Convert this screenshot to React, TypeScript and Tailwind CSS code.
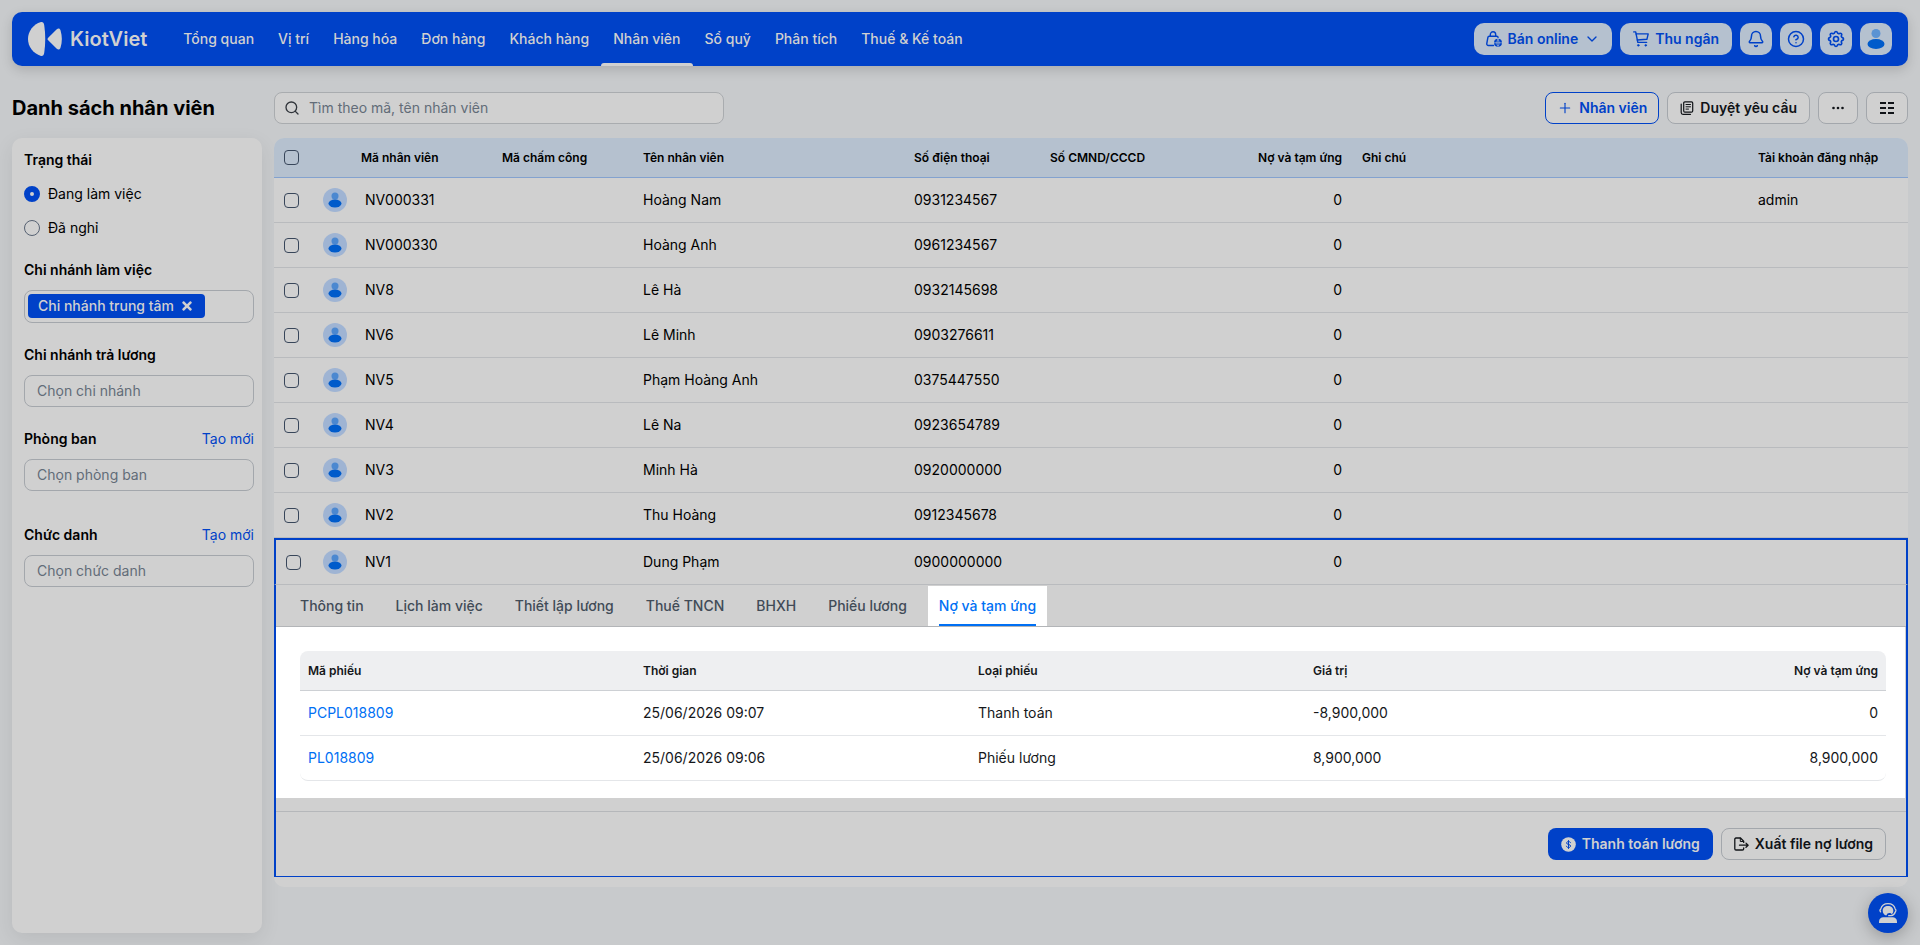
import { ReactNode, useState } from 'react'
import { Search, Plus, Bell, ChevronDown, CircleHelp } from 'lucide-react'
import { TbSettings } from 'react-icons/tb'
import { FaTimes } from 'react-icons/fa'

interface Employee {
  code: string
  name: string
  phone: string
  debt: string
  account?: string
}

const NAV_ITEMS = ['Tổng quan', 'Vị trí', 'Hàng hóa', 'Đơn hàng', 'Khách hàng', 'Nhân viên', 'Sổ quỹ', 'Phân tích', 'Thuế & Kế toán']

const EMPLOYEES: Employee[] = [
  { code: 'NV000331', name: 'Hoàng Nam', phone: '0931234567', debt: '0', account: 'admin' },
  { code: 'NV000330', name: 'Hoàng Anh', phone: '0961234567', debt: '0' },
  { code: 'NV8', name: 'Lê Hà', phone: '0932145698', debt: '0' },
  { code: 'NV6', name: 'Lê Minh', phone: '0903276611', debt: '0' },
  { code: 'NV5', name: 'Phạm Hoàng Anh', phone: '0375447550', debt: '0' },
  { code: 'NV4', name: 'Lê Na', phone: '0923654789', debt: '0' },
  { code: 'NV3', name: 'Minh Hà', phone: '0920000000', debt: '0' },
  { code: 'NV2', name: 'Thu Hoàng', phone: '0912345678', debt: '0' },
]

const SELECTED: Employee = { code: 'NV1', name: 'Dung Phạm', phone: '0900000000', debt: '0' }

const TABS = ['Thông tin', 'Lịch làm việc', 'Thiết lập lương', 'Thuế TNCN', 'BHXH', 'Phiếu lương', 'Nợ và tạm ứng']

const VOUCHERS = [
  { code: 'PCPL018809', time: '25/06/2026 09:07', type: 'Thanh toán', value: '-8,900,000', debt: '0' },
  { code: 'PL018809', time: '25/06/2026 09:06', type: 'Phiếu lương', value: '8,900,000', debt: '8,900,000' },
]

function Logo() {
  return (
    <svg className="w-[34px] h-[34px]" viewBox="0 0 34 34" fill="#d0d0d0">
      <path d="M13 .1C15 -.1 15.800 .8 16.200 3C17.600 12 17.600 22 16.200 31C15.800 33.200 15 34.100 13 33.900C5 31.500 0 24.500 0 17S5 2.500 13 .1Z" />
      <path d="M20.200 15.700L28.500 7.400C30.400 5.800 31.800 6.300 32.500 8.200C34.300 14 34.300 20 32.500 25.800C31.800 27.700 30.400 28.200 28.500 26.600L20.200 18.300C19.300 17.400 19.300 16.600 20.200 15.700Z" />
    </svg>
  )
}

function BagGlobeIcon() {
  return (
    <svg className="w-4 h-4" viewBox="0 0 16 16" fill="none" stroke="currentColor" strokeWidth="1.4" strokeLinecap="round" strokeLinejoin="round">
      <path d="M7.500 14.500H2.400C1.300 14.500 .6 13.600 .8 12.500L1.900 6.300C2 5.600 2.600 5.200 3.200 5.200H10.800C11.500 5.200 12 5.600 12.100 6.300" />
      <path d="M4.300 5V3.700C4.300 2 5.500 .8 7 .8S9.700 2 9.700 3.700V5" />
      <circle cx="12" cy="11.800" r="4" fill="currentColor" stroke="none" />
      <path d="M8.500 11.800H15.500M12 8.300C10.500 10.300 10.500 13.300 12 15.300C13.500 13.300 13.500 10.300 12 8.300Z" stroke="#b5c1cf" strokeWidth=".7" />
    </svg>
  )
}

function CartIcon() {
  return (
    <svg className="w-4 h-4" viewBox="0 0 16 16" fill="none" stroke="currentColor" strokeWidth="1.4" strokeLinecap="round" strokeLinejoin="round">
      <path d="M.7 .9H2.700L4.800 11.400H13.600" />
      <path d="M3.100 2.900H15.200L13.900 8.300L4.300 9" />
      <circle cx="5.300" cy="14.300" r=".9" fill="currentColor" strokeWidth=".6" />
      <circle cx="12.700" cy="14.300" r=".9" fill="currentColor" strokeWidth=".6" />
    </svg>
  )
}

function PagesIcon() {
  return (
    <svg className="w-[14px] h-[14px]" viewBox="0 0 14 14" fill="none" stroke="currentColor" strokeWidth="1.2" strokeLinecap="round" strokeLinejoin="round">
      <rect x="3.700" y=".8" width="9" height="10.400" rx="1.200" />
      <path d="M6 3.500H10.500M6 5.800H10.500M6 8.100H8.500" strokeWidth="1" />
      <path d="M1.200 3V11.500C1.200 12.600 1.900 13.300 3 13.300H10.500" />
    </svg>
  )
}

function ColumnsIcon() {
  return (
    <svg className="w-4 h-4" viewBox="0 0 16 16" fill="currentColor">
      <path d="M1 2h6v2H1zM9 2h6v2H9zM1 7h6v2H1zM9 7h6v2H9zM1 12h6v2H1zM9 12h6v2H9z" />
    </svg>
  )
}

function CoinIcon() {
  return (
    <svg className="w-[15px] h-[15px]" viewBox="0 0 15 15" fill="none" strokeLinecap="round">
      <circle cx="7.500" cy="7.500" r="7.300" fill="#d0d0d0" />
      <path d="M9.500 5.700C9.300 4.900 8.500 4.500 7.500 4.500C6.400 4.500 5.600 5.100 5.600 6C5.600 8 9.600 7 9.600 9C9.600 10 8.700 10.500 7.500 10.500C6.400 10.500 5.600 10 5.400 9.200M7.500 3.500V11.500" stroke="#0041c8" strokeWidth="1" />
    </svg>
  )
}

function ExportIcon() {
  return (
    <svg className="w-[15px] h-[14px]" viewBox="0 0 15 14" fill="none" stroke="currentColor" strokeWidth="1.3" strokeLinecap="round" strokeLinejoin="round">
      <path d="M9.700 10.800V11.700C9.700 12.500 9.200 13 8.400 13H2C1.200 13 .8 12.500 .8 11.700V2.300C.8 1.500 1.200 1 2 1H6.500L9.700 4.200V5.400" />
      <path d="M6.300 1.200V4.500H9.500" strokeWidth="1" />
      <path d="M5.500 8.200H14M12 6.100L14.100 8.200L12 10.300" />
    </svg>
  )
}

function SupportIcon() {
  return (
    <svg className="w-5 h-5" viewBox="0 0 20 20" fill="none" stroke="#d0d0d0" strokeWidth="1.3" strokeLinecap="round">
      <path d="M2.600 8.800C1.900 7.900 1.900 6.600 2.800 5.900C3.600 2.700 6.300 .7 10 .7S16.400 2.700 17.200 5.900C18.100 6.600 18.100 7.900 17.400 8.800C16.700 11 15.200 12.400 13 12.700H10.700" />
      <path d="M4.700 7.800C4.700 4.900 6.700 3 10 3S15.300 4.900 15.300 7.800C15.300 9.300 14.700 10.400 13.800 11.200C12.900 9.900 10.900 9.700 9.500 10.600L8.300 12.600C6.100 12 4.700 10.200 4.700 7.800Z" fill="#d0d0d0" stroke="none" />
      <path d="M1 20V18.700C1 16 2.900 14.300 5.400 14.300H14.600C17.100 14.300 19 16 19 18.700V20Z" fill="#d0d0d0" stroke="none" />
    </svg>
  )
}

function Avatar() {
  return (
    <svg className="w-6 h-6 mx-auto" viewBox="0 0 24 24">
      <circle cx="12" cy="12" r="12" fill="#9fb4d3" />
      <circle cx="12" cy="8" r="3.500" fill="#4c88d0" />
      <ellipse cx="12" cy="15.500" rx="6.500" ry="4" fill="#005bcb" />
    </svg>
  )
}

function IconButton({ label, children }: { label: string; children: ReactNode }) {
  return (
    <button type="button" aria-label={label} className="w-8 h-8 rounded-[10px] bg-[#b5c1cf] text-[#0041c8] flex items-center justify-center">
      {children}
    </button>
  )
}

function Checkbox({ label }: { label: string }) {
  return (
    <input
      type="checkbox"
      aria-label={label}
      className="appearance-none block w-[15px] h-[15px] rounded-[4px] border border-[#38465a] checked:bg-[#0041c8]"
    />
  )
}

function Header() {
  return (
    <header className="h-[54px] shrink-0 rounded-[10px] bg-[#0041c8] px-4 flex items-center shadow-[0_4px_12px_rgba(0,0,0,0.15)]">
      <a href="#" className="flex items-center gap-2 text-[#d0d0d0] text-xl font-semibold">
        <Logo />
        KiotViet
      </a>
      <nav className="ml-6 h-full flex">
        {NAV_ITEMS.map(item => (
          <a
            key={item}
            href="#"
            className={`relative h-full px-3 flex items-center text-sm font-medium whitespace-nowrap text-[#d0d0d0] ${
              item === 'Nhân viên' ? 'after:absolute after:inset-x-0 after:bottom-0 after:h-[3px] after:rounded-t-sm after:bg-[#d0d0d0]' : ''
            }`}
          >
            {item}
          </a>
        ))}
      </nav>
      <div className="ml-auto flex items-center gap-2">
        <button type="button" className="h-8 px-3 rounded-[10px] bg-[#b5c1cf] text-[#0041c8] text-sm font-semibold whitespace-nowrap flex items-center gap-1.5">
          <BagGlobeIcon />
          Bán online
          <ChevronDown className="w-4 h-4" />
        </button>
        <button type="button" className="h-8 px-[13px] rounded-[10px] bg-[#b5c1cf] text-[#0041c8] text-sm font-semibold whitespace-nowrap flex items-center gap-1.5">
          <CartIcon />
          Thu ngân
        </button>
        <IconButton label="Thông báo"><Bell className="w-[18px] h-[18px]" /></IconButton>
        <IconButton label="Trợ giúp"><CircleHelp className="w-[18px] h-[18px]" /></IconButton>
        <IconButton label="Thiết lập"><TbSettings className="w-5 h-5" /></IconButton>
        <IconButton label="Tài khoản">
          <svg className="w-8 h-8" viewBox="0 0 32 32">
            <circle cx="16" cy="10.500" r="4.500" fill="#5b93d3" />
            <ellipse cx="16" cy="21" rx="8.500" ry="5" fill="#005bcb" />
          </svg>
        </IconButton>
      </div>
    </header>
  )
}

function Toolbar() {
  const buttonClass = 'h-8 rounded-lg border border-[#a3a7ac] bg-[#d0d0d0] font-semibold whitespace-nowrap flex items-center gap-1.5'

  return (
    <div className="flex items-center text-sm text-[#101317]">
      <h1 className="w-[262px] shrink-0 text-xl font-bold text-black">Danh sách nhân viên</h1>
      <label className="w-[450px] h-8 px-[9px] flex items-center gap-[9px] rounded-lg border border-[#a9acaf] bg-[#d0d0d0]">
        <Search className="w-4 h-4 text-[#30343a]" />
        <input
          type="text"
          aria-label="Tìm kiếm"
          placeholder="Tìm theo mã, tên nhân viên"
          className="flex-1 min-w-0 outline-none placeholder:text-[#626c78]"
        />
      </label>
      <div className="ml-auto flex gap-2">
        <button type="button" className="h-8 px-[11px] rounded-lg border border-[#0041c8] bg-[#d0d0d0] text-[#0041c8] font-semibold whitespace-nowrap flex items-center gap-1.5">
          <Plus className="w-4 h-4" strokeWidth={1.7} />
          Nhân viên
        </button>
        <button type="button" className={`${buttonClass} px-3`}>
          <PagesIcon />
          Duyệt yêu cầu
        </button>
        <button type="button" aria-label="Thao tác khác" className={`${buttonClass} px-[11px]`}>
          <svg className="w-4 h-4" viewBox="0 0 16 16" fill="currentColor">
            <circle cx="3.500" cy="8" r="1.300" />
            <circle cx="8" cy="8" r="1.300" />
            <circle cx="12.500" cy="8" r="1.300" />
          </svg>
        </button>
        <button type="button" aria-label="Tùy chọn cột" className={`${buttonClass} px-3`}>
          <ColumnsIcon />
        </button>
      </div>
    </div>
  )
}

function FilterInput({ id, title, placeholder, creatable }: { id: string; title: string; placeholder: string; creatable?: boolean }) {
  return (
    <div>
      <div className="flex justify-between leading-5">
        <label htmlFor={id} className="font-semibold">{title}</label>
        {creatable && <a href="#" className="text-[#0041c8]">Tạo mới</a>}
      </div>
      <input
        id={id}
        type="text"
        placeholder={placeholder}
        className="mt-2.5 w-full h-8 px-3 pb-0.5 rounded-lg border border-[#a3a7ac] placeholder:text-[#626c78] outline-none"
      />
    </div>
  )
}

function Sidebar() {
  const [status, setStatus] = useState('working')

  const radioClass = 'appearance-none w-4 h-4 rounded-full border border-[#566172] checked:border-[6px] checked:border-[#0041c8]'

  return (
    <aside className="w-[250px] shrink-0 rounded-[10px] bg-[#d0d0d0] pl-3 pr-2 py-3 text-sm shadow-[0_6px_20px_rgba(0,0,0,0.08)]">
      <fieldset>
        <legend className="font-semibold leading-5">Trạng thái</legend>
        <label className="mt-3.5 flex items-center gap-2 leading-5">
          <input type="radio" name="status" className={radioClass} checked={status === 'working'} onChange={() => setStatus('working')} />
          Đang làm việc
        </label>
        <label className="mt-3.5 flex items-center gap-2 leading-5">
          <input type="radio" name="status" className={radioClass} checked={status === 'left'} onChange={() => setStatus('left')} />
          Đã nghỉ
        </label>
      </fieldset>

      <div className="my-[22px]">
        <label htmlFor="branch" className="block font-semibold leading-5">Chi nhánh làm việc</label>
        <div className="mt-2.5 h-[33px] px-[3px] pt-[3px] flex items-start rounded-lg border border-[#a3a7ac]">
          <span className="h-6 px-2.5 flex shrink-0 items-center gap-[5px] rounded bg-[#0041c8] text-[#d0d0d0] font-medium">
            Chi nhánh trung tâm
            <button type="button" aria-label="Bỏ chi nhánh" className="w-4 h-4 flex items-center justify-center">
              <FaTimes className="w-3.5 h-3.5" />
            </button>
          </span>
          <input id="branch" type="text" className="min-w-0 flex-1 outline-none" />
        </div>
      </div>

      <FilterInput id="payBranch" title="Chi nhánh trả lương" placeholder="Chọn chi nhánh" />
      <div className="mt-[22px] mb-[34px]">
        <FilterInput id="department" title="Phòng ban" placeholder="Chọn phòng ban" creatable />
      </div>
      <FilterInput id="position" title="Chức danh" placeholder="Chọn chức danh" creatable />
    </aside>
  )
}

function VoucherTable() {
  return (
    <table className="w-full table-fixed border-separate border-spacing-0 text-left">
      <colgroup>
        <col className="w-[335px]" />
        <col className="w-[335px]" />
        <col className="w-[335px]" />
        <col className="w-[335px]" />
        <col />
      </colgroup>
      <thead>
        <tr className="h-10 text-xs text-[#15171a] *:bg-[#eeeff1] *:px-2 *:border-b *:border-[#cdd0d4] *:font-semibold">
          <th className="rounded-tl-lg">Mã phiếu</th>
          <th>Thời gian</th>
          <th>Loại phiếu</th>
          <th>Giá trị</th>
          <th className="rounded-tr-lg text-right">Nợ và tạm ứng</th>
        </tr>
      </thead>
      <tbody>
        {VOUCHERS.map(v => (
          <tr key={v.code} className="group h-[45px] text-[#15171a] *:px-2 *:border-b *:border-[#e4e6e9]">
            <td className="group-last:rounded-bl-lg"><a href="#" className="text-[#0070f4]">{v.code}</a></td>
            <td>{v.time}</td>
            <td>{v.type}</td>
            <td>{v.value}</td>
            <td className="text-right group-last:rounded-br-lg">{v.debt}</td>
          </tr>
        ))}
      </tbody>
    </table>
  )
}

function EmployeeDetail() {
  const [tab, setTab] = useState('Nợ và tạm ứng')

  return (
    <div>
      <div role="tablist" className="flex gap-2.5 pl-[13px] pt-px border-b border-[#b3b5b8]">
        {TABS.map(item => (
          <button
            key={item}
            type="button"
            role="tab"
            aria-selected={tab === item}
            onClick={() => setTab(item)}
            className={`group h-10 px-[11px] font-medium whitespace-nowrap ${tab === item ? 'bg-white text-[#0070f4]' : 'text-[#414b57]'}`}
          >
            <span className="h-full flex items-center border-y-2 border-transparent group-aria-selected:border-b-[#0070f4]">{item}</span>
          </button>
        ))}
      </div>
      <div className="mr-px bg-white pl-6 pr-[19px] pt-6 pb-[17px]">
        <VoucherTable />
      </div>
      <div className="mt-[13px] border-t border-[#b5b7ba] py-4 pr-5 flex justify-end gap-2">
        <button type="button" className="h-8 px-[13px] rounded-lg bg-[#0041c8] text-[#d0d0d0] font-semibold flex items-center gap-1.5">
          <CoinIcon />
          Thanh toán lương
        </button>
        <button type="button" className="h-8 px-3 rounded-lg border border-[#a3a7ac] text-[#101317] font-semibold flex items-center gap-1.5">
          <ExportIcon />
          Xuất file nợ lương
        </button>
      </div>
    </div>
  )
}

function EmployeeRow({ employee, selected }: { employee: Employee; selected?: boolean }) {
  return (
    <tr
      className={`*:border-b *:border-b-[#b9bbbe] ${
        selected
          ? 'h-[47px] *:border-t-2 *:border-t-[#0041c8] *:first:border-l-2 *:first:border-l-[#0041c8] *:last:border-r-2 *:last:border-r-[#0041c8]'
          : 'h-[45px]'
      }`}
    >
      <td className="pl-2.5"><Checkbox label={`Chọn ${employee.code}`} /></td>
      <td><Avatar /></td>
      <td className="pl-3">{employee.code}</td>
      <td></td>
      <td className="pl-2">{employee.name}</td>
      <td className="pl-2">{employee.phone}</td>
      <td></td>
      <td className="pr-3 text-right">{employee.debt}</td>
      <td></td>
      <td className="pl-2">{employee.account}</td>
    </tr>
  )
}

function EmployeeTable() {
  return (
    <main className="flex-1 min-w-0 self-start overflow-hidden rounded-[10px] bg-[#d0d0d0] pb-2.5 text-sm">
      <table className="w-full table-fixed border-separate border-spacing-0 text-left">
        <colgroup>
          <col className="w-[42px]" />
          <col className="w-[37px]" />
          <col className="w-[141px]" />
          <col className="w-[141px]" />
          <col className="w-[271px]" />
          <col className="w-[136px]" />
          <col className="w-[136px]" />
          <col className="w-[176px]" />
          <col />
          <col className="w-[158px]" />
        </colgroup>
        <thead>
          <tr className="h-10 bg-[#b5c1cf] text-xs whitespace-nowrap *:border-b *:border-[#83a2cf] *:font-semibold">
            <th className="pl-2.5"><Checkbox label="Chọn tất cả" /></th>
            <th></th>
            <th className="pl-2">Mã nhân viên</th>
            <th className="pl-2">Mã chấm công</th>
            <th className="pl-2">Tên nhân viên</th>
            <th className="pl-2">Số điện thoại</th>
            <th className="pl-2">Số CMND/CCCD</th>
            <th className="pr-3 text-right">Nợ và tạm ứng</th>
            <th className="pl-2">Ghi chú</th>
            <th className="pl-2">Tài khoản đăng nhập</th>
          </tr>
        </thead>
        <tbody>
          {EMPLOYEES.map(e => (
            <EmployeeRow key={e.code} employee={e} />
          ))}
          <EmployeeRow employee={SELECTED} selected />
          <tr>
            <td colSpan={10} className="border-x-2 border-b border-[#0041c8]">
              <EmployeeDetail />
            </td>
          </tr>
        </tbody>
      </table>
    </main>
  )
}

export default function App() {
  return (
    <div className="min-h-screen p-3 flex flex-col bg-[#c8cacc] text-black font-[Inter,'Liberation_Sans',sans-serif]">
      <Header />
      <div className="mt-[26px] mb-3.5">
        <Toolbar />
      </div>
      <div className="flex-1 flex gap-3">
        <Sidebar />
        <EmployeeTable />
      </div>
      <button
        type="button"
        aria-label="Hỗ trợ"
        className="fixed right-3 bottom-3 w-10 h-10 rounded-full bg-[#0041c8] flex items-center justify-center shadow-[0_4px_16px_rgba(0,0,0,0.25)]"
      >
        <SupportIcon />
      </button>
    </div>
  )
}
